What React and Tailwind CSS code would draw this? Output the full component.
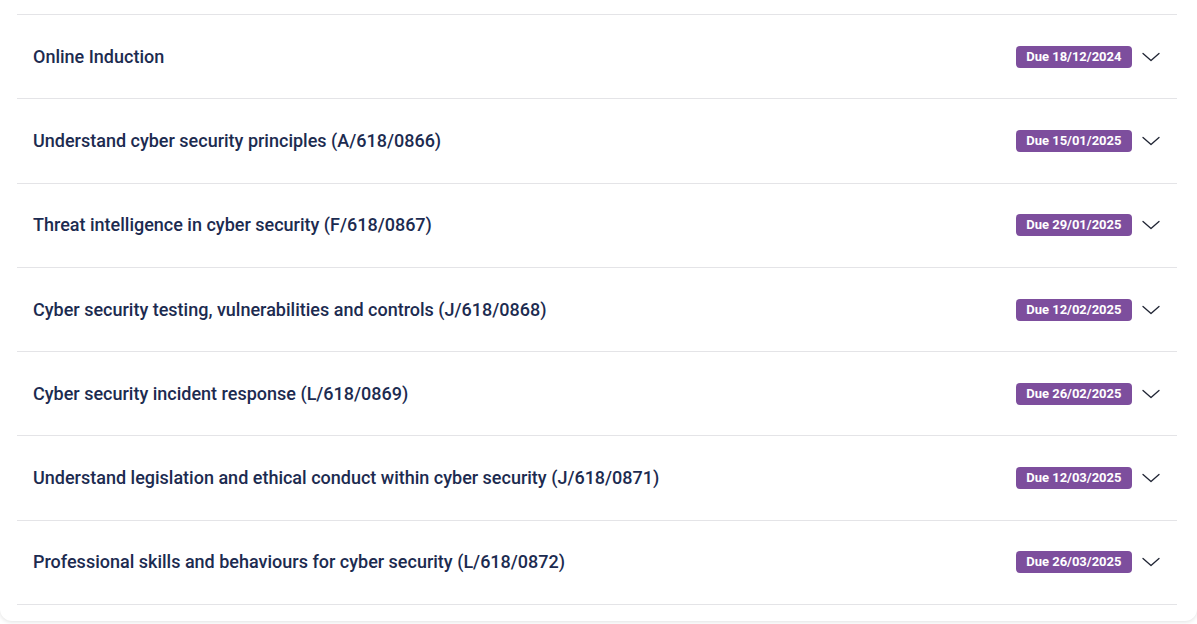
import React from "react";

const items = [
  ["Online Induction", "Due 18/12/2024"],
  ["Understand cyber security principles (A/618/0866)", "Due 15/01/2025"],
  ["Threat intelligence in cyber security (F/618/0867)", "Due 29/01/2025"],
  ["Cyber security testing, vulnerabilities and controls (J/618/0868)", "Due 12/02/2025"],
  ["Cyber security incident response (L/618/0869)", "Due 26/02/2025"],
  ["Understand legislation and ethical conduct within cyber security (J/618/0871)", "Due 12/03/2025"],
  ["Professional skills and behaviours for cyber security (L/618/0872)", "Due 26/03/2025"],
];

function Chevron() {
  return (
    <svg width="18" height="10" viewBox="0 0 18 10" fill="none" className="shrink-0">
      <path d="M1 1.5 L9 8.5 L17 1.5" stroke="#1f2433" strokeWidth="1.3" strokeLinecap="round" strokeLinejoin="round" />
    </svg>
  );
}

export default function App() {
  return (
    <div className="w-[1197px] h-[624px] bg-white overflow-hidden" style={{ fontFamily: "Roboto, 'Liberation Sans', sans-serif" }}>
      <div className="bg-white rounded-b-xl shadow-[0_1px_4px_rgba(0,0,0,0.12)] pl-[17px] pr-[20px] pt-[14px] pb-[16px]">
        <div className="border-t border-[#e4e4e7]">
          {items.map(([title, due]) => (
            <div key={title} className="h-[84.3px] border-b border-[#e4e4e7] flex items-center pl-4 pr-[17px]">
              <div className="flex-1 text-[18px] font-medium text-[#1c2b50] leading-6">{title}</div>
              <div className="flex items-center gap-[10px]">
                <span className="bg-[#7d4e9d] text-white text-[13px] font-bold leading-[22px] h-[22px] px-[10.5px] rounded-[4px]">{due}</span>
                <Chevron />
              </div>
            </div>
          ))}
        </div>
      </div>
    </div>
  );
}
